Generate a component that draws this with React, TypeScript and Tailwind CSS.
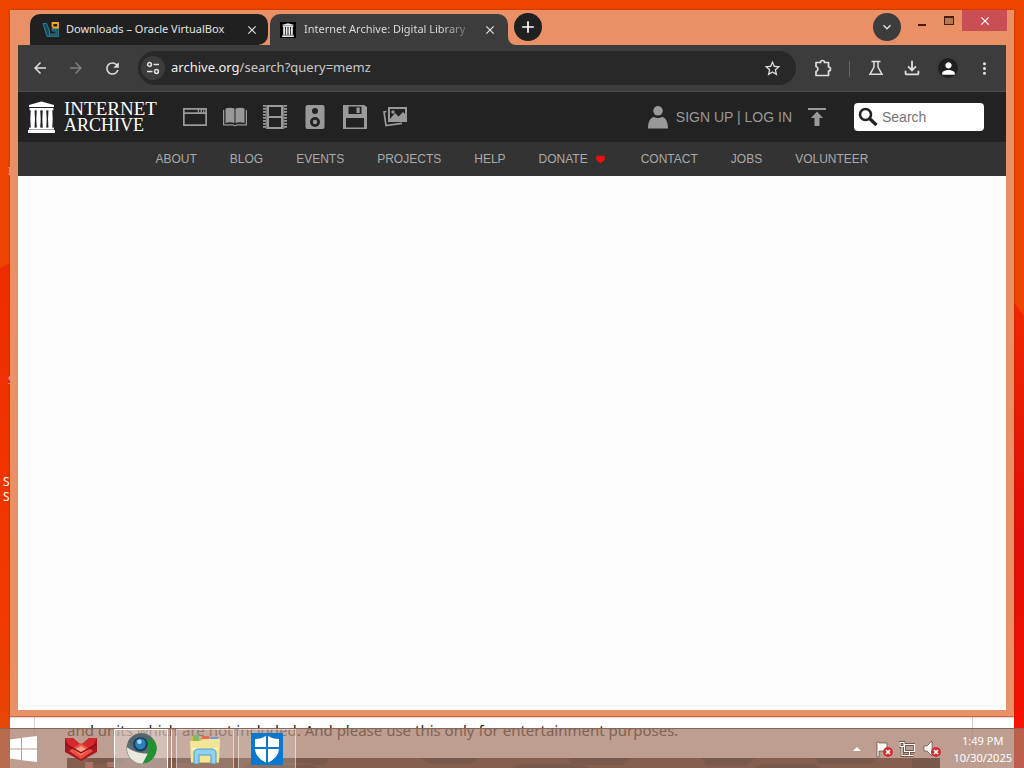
import React from "react";
import {
  MdArrowBack,
  MdArrowForward,
  MdClose,
  MdMoreVert,
  MdOutlineFileDownload,
  MdPerson,
  MdRefresh,
  MdStarBorder,
  MdAdd,
  MdKeyboardArrowDown,
} from "react-icons/md";

const ui = "font-['Noto_Sans','Open_Sans',sans-serif]";
const arial = "font-['Liberation_Sans',Arial,sans-serif]";

function Wallpaper() {
  return (
    <svg className="absolute inset-0 h-full w-full" viewBox="0 0 1024 768" preserveAspectRatio="none" aria-hidden="true">
      <defs>
        <linearGradient id="wallRight" x1="0" y1="0" x2="0" y2="1">
          <stop offset="0" stopColor="#f02800" />
          <stop offset="0.5" stopColor="#e00f08" />
          <stop offset="1" stopColor="#fa1400" />
        </linearGradient>
        <linearGradient id="wallLeft" x1="0" y1="0" x2="0" y2="1">
          <stop offset="0" stopColor="#f02c00" />
          <stop offset="0.7" stopColor="#f23a00" />
          <stop offset="1" stopColor="#e44a08" />
        </linearGradient>
      </defs>
      <rect width="1024" height="768" fill="#ee4400" />
      <path d="M0 268 L12 262 V768 H0Z" fill="url(#wallLeft)" />
      <path d="M1012 300 L1024 316 V768 H1012Z" fill="url(#wallRight)" />
    </svg>
  );
}

function ArchiveBuilding({ className }: { className: string }) {
  return (
    <svg className={className} viewBox="0 0 27 32" fill="currentColor" aria-hidden="true">
      <path d="M13.500 0.500 L26 4 V6 H1 V4Z" />
      <rect x="1.600" y="7" width="23.800" height="2.400" />
      <rect x="1" y="26.600" width="25" height="2" />
      <rect x="0" y="29" width="27" height="3" />
      <path d="M2.800 9h3.700l.5 9-.5 9H2.800l-.5-9z" />
      <path d="M8.800 9h3.400l.5 9-.5 9H8.800l-.5-9z" />
      <path d="M14.800 9h3.400l.5 9-.5 9h-3.400l-.5-9z" />
      <path d="M20.500 9h3.700l.5 9-.5 9h-3.700l-.5-9z" />
    </svg>
  );
}

function VirtualBoxIcon() {
  return (
    <svg className="h-4 w-[18px] shrink-0" viewBox="0 0 18 16" fill="none" aria-hidden="true">
      <path d="M1 1.500h3.500L7.500 9v5.500H5z" fill="#174a5c" stroke="#2d7f98" />
      <path d="M10 6.500h6.500v8H7.500V12H14V9h-4z" fill="#1c5a70" stroke="#2d7f98" strokeWidth=".8" />
      <path d="M10.500 5V1H16v4.500h-5.500" stroke="#f5a81c" strokeWidth="1.800" />
    </svg>
  );
}

function TabStrip() {
  return (
    <div className={`flex h-[35px] items-start pl-5 pr-[7px] text-[11px] text-[#e3e3e3] ${ui}`}>
      <div role="tablist" className="flex items-start gap-0.5 pt-1">
        <div role="tab" aria-selected="false" className="relative flex h-[31px] w-[238px] items-center rounded-t-[10px] rounded-br-[10px] bg-[#202020] pl-3 pr-2">
          <VirtualBoxIcon />
          <span className="ml-1.5 flex-1 whitespace-nowrap">Downloads – Oracle VirtualBox</span>
          <button aria-label="Close Downloads tab" className="grid size-4 place-items-center"><MdClose className="size-3.5" /></button>
        </div>
        <div role="tab" aria-selected="true" className="relative flex h-[31px] w-[238px] items-center rounded-t-[10px] bg-[#3c3c3c] pl-2.5 pr-2">
          <span className="grid size-4 shrink-0 place-items-center bg-black text-[#e6e6e6]"><ArchiveBuilding className="h-3.5 w-3" /></span>
          <span className="ml-2 bg-linear-to-r from-[#e3e3e3] from-85% to-[#777] bg-clip-text whitespace-nowrap text-transparent">Internet Archive: Digital Library</span>
          <button aria-label="Close Internet Archive tab" className="ml-auto grid size-5 place-items-center"><MdClose className="size-3.5" /></button>
          <svg className="absolute -right-2 bottom-0 size-2" viewBox="0 0 8 8" aria-hidden="true"><path d="M0 0 A8 8 0 0 0 8 8 H0Z" fill="#3c3c3c" /></svg>
        </div>
      </div>
      <button aria-label="New tab" className="ml-1.5 mt-[3px] grid size-7 place-items-center rounded-full bg-[#202020] text-white"><MdAdd className="size-5" /></button>
      <button aria-label="Search tabs" className="ml-auto mt-[3px] grid size-7 place-items-center rounded-full bg-[#3c3c3c]"><MdKeyboardArrowDown className="size-4" /></button>
      <button aria-label="Minimize" className="ml-2 grid h-[21px] w-[26px] place-items-center"><span className="mt-2 h-0.5 w-2 bg-[#4a1c0c]" /></button>
      <button aria-label="Maximize" className="grid h-[21px] w-[27px] place-items-center"><span className="h-[9px] w-2.5 border border-t-2 border-[#4a1c0c] bg-[#b97850]" /></button>
      <button aria-label="Close" className="grid h-[21px] w-[45px] place-items-center bg-[#c94f55] text-white"><MdClose className="size-3.5" /></button>
    </div>
  );
}

const toolButton = "grid h-[34px] w-9 shrink-0 place-items-center";

function Toolbar() {
  return (
    <div className={`flex h-[47px] items-start border-b border-[#4a4a4a] bg-[#3c3c3c] px-1 pt-1.5 text-[#dedede] ${ui}`}>
      <button aria-label="Back" className={toolButton}><MdArrowBack className="size-[18px]" /></button>
      <button aria-label="Forward" className={`${toolButton} text-[#808080]`}><MdArrowForward className="size-[18px]" /></button>
      <button aria-label="Reload" className={toolButton}><MdRefresh className="size-[19px]" /></button>
      <div className="ml-2 mr-[9px] flex h-[34px] min-w-0 flex-1 items-center rounded-full bg-[#282828] pl-[3px] pr-1.5">
        <button aria-label="Site information" className="grid size-6 shrink-0 place-items-center rounded-full bg-[#3c3c3c]">
          <svg className="h-4 w-4" viewBox="0 0 16 16" fill="none" stroke="#e3e3e3" strokeWidth="1.500" aria-hidden="true">
            <circle cx="4.500" cy="4.500" r="1.900" /><path d="M8.500 4.500H14M2 11.500h5.500" /><circle cx="11.500" cy="11.500" r="1.900" />
          </svg>
        </button>
        <a href="#search" className="ml-1.5 flex-1 whitespace-nowrap text-[13px] text-[#c8c8c8]"><span className="text-[#f0f0f0]">archive.org</span>/search?query=memz</a>
        <button aria-label="Bookmark" className={toolButton}><MdStarBorder className="size-[19px]" /></button>
      </div>
      <button aria-label="Extensions" className={toolButton}>
        <svg className="size-[18px]" viewBox="0 0 18 18" fill="none" stroke="currentColor" strokeWidth="1.700" strokeLinejoin="round" aria-hidden="true">
          <path d="M2 3.500h4.500a2 2 0 0 1 4 0H14.500V8a2 2 0 0 1 0 4v4.500H2v-4a2.600 2.600 0 0 0 0-5z" />
        </svg>
      </button>
      <span className="mt-2.5 flex h-4 w-[17px] shrink-0 justify-center"><span className="w-px bg-[#666]" /></span>
      <button aria-label="Labs" className={toolButton}>
        <svg className="size-4" viewBox="0 0 16 16" fill="none" stroke="currentColor" strokeWidth="1.500" aria-hidden="true">
          <path d="M3.500 1.500h9M6 1.500v5.500L2 14.250h12L10 7V1.500" />
        </svg>
      </button>
      <button aria-label="Downloads" className={toolButton}><MdOutlineFileDownload className="size-[22px]" /></button>
      <button aria-label="Profile" className={toolButton}><span className="grid size-5 place-items-center rounded-full bg-[#1f1f1f] text-white"><MdPerson className="size-[19px]" /></span></button>
      <button aria-label="Menu" className={toolButton}><MdMoreVert className="size-[19px]" /></button>
    </div>
  );
}

const media: { label: string; art: React.ReactNode }[] = [
  { label: "Web", art: <path fillRule="evenodd" d="M0 3h24v18H0zM1.700 9v10.300h20.600V9zM1.700 4.700V7.200h13V4.700zM16 4.700V7.200h1.600V4.700zM19 4.700V7.200h1.200V4.700zM21.300 4.700V7.200h1V4.700z" /> },
  { label: "Texts", art: <><path d="M2.500 3.500c3-1.200 6.800-1 9 0V18c-3-1-6-1-9 0zM12.500 3.500c3-1 6-1.200 9 0V18c-3-1-6-1-9 0z" /><path d="M.6 5v14.800h9.600c1 1.200 2.600 1.200 3.600 0h9.600V5" fill="none" stroke="currentColor" strokeWidth="1.300" /></> },
  { label: "Video", art: <><path fillRule="evenodd" d="M4 0h16v24H4zM6 2v9h12V2zM6 13v9h12v-9z" /><path d="M1.500 0v24M22.500 0v24" stroke="currentColor" strokeWidth="3" strokeDasharray="1.800 1.200" /><path d="M3.300 0v24M20.700 0v24" stroke="currentColor" strokeWidth=".9" /></> },
  { label: "Audio", art: <path fillRule="evenodd" d="M4.500 0h15a2 2 0 0 1 2 2v20a2 2 0 0 1-2 2h-15a2 2 0 0 1-2-2V2a2 2 0 0 1 2-2zM12 3a3 3 0 1 0 0 6 3 3 0 0 0 0-6zM12 12a5 5 0 1 0 0 10 5 5 0 0 0 0-10zM12 14.800a2.200 2.200 0 1 1 0 4.400 2.200 2.200 0 0 1 0-4.400z" /> },
  { label: "Software", art: <path fillRule="evenodd" d="M0 0h21l3 2v22H0zM5.500 1.500V9h13V1.500zM13.500 2.500h3.200v5.500h-3.200zM3 13v9.500h18V13z" /> },
  { label: "Images", art: <><path fillRule="evenodd" d="M5 2h19v15H5zM7 4v11h15V4z" /><path d="M7 14l5-6 3.500 3.500L20 7l2 2v6H7z" /><circle cx="10" cy="7" r="1.700" /><path d="M3.500 6.500L1 7l2 13.500 16-2.200" fill="none" stroke="currentColor" strokeWidth="1.700" /></> },
];

const links = ["ABOUT", "BLOG", "EVENTS", "PROJECTS", "HELP", "DONATE", "CONTACT", "JOBS", "VOLUNTEER"];

function ArchiveHeader() {
  return (
    <header className={arial}>
      <div className="flex h-[50px] items-center bg-[#222] pl-2.5 pr-[22px] text-[#999]">
        <a href="#home" className="flex items-center gap-[9px] text-white">
          <ArchiveBuilding className="h-8 w-[27px]" />
          <span className="flex w-[102px] flex-col font-['Liberation_Serif',serif] text-[19px] leading-[17px]">
            <span>INTERNET</span>
            <span className="text-[18px]">ARCHIVE</span>
          </span>
        </a>
        <nav aria-label="Media" className="ml-[9px] flex">
          {media.map((m) => (
            <a key={m.label} href={`#${m.label.toLowerCase()}`} aria-label={m.label} className="grid h-[50px] w-10 place-items-center">
              <svg className="size-6" viewBox="0 0 24 24" fill="currentColor" aria-hidden="true">{m.art}</svg>
            </a>
          ))}
        </nav>
        <div className="ml-auto flex items-center">
          <svg className="h-6 w-5" viewBox="0 0 20 24" fill="currentColor" aria-hidden="true"><circle cx="10" cy="5.800" r="4.800" /><path d="M0 23.500c0-7 2.500-11 6-11.500 2.500 1.300 5.500 1.300 8 0 3.500.5 6 4.500 6 11.500z" /></svg>
          <span className="ml-2 whitespace-nowrap text-sm"><a href="#signup">SIGN UP</a> | <a href="#login">LOG IN</a></span>
          <a href="#upload" aria-label="Upload" className="ml-4"><svg className="h-5 w-[18px]" viewBox="0 0 18 20" fill="currentColor" aria-hidden="true"><path d="M0 1h18v2H0zM9 4.500l6 6.500h-3.500v8h-5v-8H3z" /></svg></a>
          <label className="ml-7 flex h-7 w-[130px] items-center rounded bg-white pl-1">
            <svg className="size-5 shrink-0" viewBox="0 0 20 20" fill="none" stroke="#222" strokeWidth="2.600" aria-hidden="true"><circle cx="7.500" cy="7.500" r="5.500" /><path d="M11.500 11.500L18.500 18" strokeWidth="3.200" /></svg>
            <input aria-label="Search" placeholder="Search" className="ml-1 w-full min-w-0 bg-transparent text-sm outline-none placeholder:text-[#757575]" />
          </label>
        </div>
      </div>
      <nav aria-label="Site" className="flex h-[34px] items-center justify-center gap-[33px] bg-[#333] text-xs text-[#aaa]">
        {links.map((l) => (
          <a key={l} href={`#${l.toLowerCase()}`} className="flex items-center gap-2 whitespace-nowrap">
            {l}
            {l === "DONATE" && <svg className="h-2 w-3" viewBox="0 0 12 8" aria-hidden="true"><path d="M0 3C0 .2 3.500 0 4.500 1 5.500 0 9 .2 9 3 9 5.500 6.500 7 4.500 8 2.500 7 0 5.500 0 3z" fill="#ee1010" /></svg>}
          </a>
        ))}
      </nav>
    </header>
  );
}

function DocumentWindow() {
  return (
    <section className={`absolute inset-x-2.5 bottom-0 h-[51px] overflow-hidden bg-white ${ui}`}>
      <div className="ml-6 mr-[41px] h-[41px] border-x border-[#d5d5d5] pl-8 pt-[3px]">
        <p className="whitespace-nowrap text-[15px] leading-[20px] text-[#222]">and units which are not included. And please use this only for entertainment purposes.</p>
      </div>
      <div className="ml-[57px] mr-[74px] h-2.5 bg-black">
        <svg className="h-full w-full" viewBox="0 0 870 10" preserveAspectRatio="none" aria-hidden="true">
          <path d="M0 0h20l4 6h30l5-6h40l10 5h30l9-5h60l8 7h40l6-7h90l10 6h40l8-6h90l4 7h50l8-7h70l5 8h40l8-8h60l5 6h50l8-6h34v10h-90l-8-4h-50l-8 4H520l-9-4h-60l-7 4H250l-8-5h-60l-6 5H0z" fill="#2e1412" />
          <path d="M18 4h8v6h-8zM40 4h7v5h-7z" fill="#c06068" />
        </svg>
      </div>
    </section>
  );
}

function Desktop() {
  return (
    <>
      <span className={`absolute left-2 top-[163px] text-[11px] leading-[15px] text-[#ead0c8] ${ui}`}>I</span>
      <span className={`absolute left-2 top-[372px] text-[11px] leading-[15px] text-[#ead0c8] ${ui}`}>S</span>
      <span className={`absolute left-[3px] top-[474px] w-2 text-xs leading-[15px] text-white ${ui}`}>S S</span>
    </>
  );
}

const taskButton = "grid h-10 place-items-center";

function BadgeCross() {
  return <g><circle cx="13" cy="12" r="5" fill="#d22f35" /><path d="M11 10l4 4m0-4l-4 4" stroke="#fff" strokeWidth="1.600" /></g>;
}

function Taskbar() {
  return (
    <footer className={`absolute inset-x-0 bottom-0 flex h-10 items-center border-t border-[#87675c] bg-[rgba(164,122,103,0.73)] pr-3 text-white ${ui}`}>
      <button aria-label="Start" className="ml-2.5 grid h-10 w-7 place-items-center">
        <svg className="h-[26px] w-7" viewBox="0 0 28 26" fill="#fff" aria-hidden="true"><path d="M0 3.500L11 2v10.500H0zM12 1.800L27 0v12.500H12zM0 13.500h11V24L0 22.500zM12 13.500h15V26l-15-1.800z" /></svg>
      </button>
      <button aria-label="Red app" className={`${taskButton} ml-[22px] w-[42px]`}>
        <svg className="h-6 w-8" viewBox="0 0 32 24" aria-hidden="true">
          <path d="M0 1l8 0 8 7 8-7 8 0v14l-16 9-16-9z" fill="#a81820" />
          <path d="M0 1h8l8 7 8-7h8l-4 8-12 6L4 9z" fill="#d42a2c" />
          <path d="M4 14l12-8 12 8-12 8z" fill="#ee5140" /><path d="M9 13l7-4 7 4-7 5z" fill="#ffa08a" /><path d="M0 7l16 9 16-9" fill="none" stroke="#8b1015" strokeWidth="1.500" />
        </svg>
      </button>
      <button aria-label="Browser" className={`${taskButton} ml-3 w-[54px] border border-white bg-white/35`}>
        <svg className="size-[31px]" viewBox="0 0 30 30" aria-hidden="true">
          <circle cx="15" cy="15" r="14.500" fill="#5f6c72" />
          <path d="M2 8A14.500 14.500 0 0 1 26 5.500L18 9 7 15z" fill="#53666d" />
          <path d="M26 5.500A14.500 14.500 0 0 1 16 29.500L22 18l-3-11z" fill="#219232" />
          <path d="M1 14a14.500 14.500 0 0 0 15 15.500L21 20c-7 0-14-2-20-6z" fill="#e9e9dd" />
          <circle cx="14" cy="11" r="7" fill="#153e5e" /><circle cx="14" cy="10.500" r="5.200" fill="#2c7db8" /><circle cx="13" cy="8.500" r="2.200" fill="#a6d7f1" />
        </svg>
      </button>
      <span className="h-10 w-1 border-r border-white/80" />
      <button aria-label="File Explorer" className={`${taskButton} ml-1 w-[58px] border border-white/50 bg-white/15`}>
        <svg className="h-[31px] w-8" viewBox="0 0 32 31" aria-hidden="true">
          <path d="M2 3h7l2 3h19v24H2z" fill="#d9b852" /><path d="M4 2h6v6H4z" fill="#7dbc64" /><path d="M13 3h7v7h-7z" fill="#e76855" /><path d="M21 4h8v8h-8z" fill="#6b9edc" /><path d="M1 8h10l3-2h17l-1 23H2z" fill="#f5e697" />
          <path d="M3 16h26" stroke="#fff4b7" strokeWidth="2" /><path d="M5 31V20c0-3 2-4 5-4h12c3 0 5 1 5 4v11h-5v-9H10v9z" fill="#8fd2ef" stroke="#4a9aca" />
        </svg>
      </button>
      <button aria-label="Windows Defender" className={`${taskButton} ml-1 w-[58px] border border-white/50 bg-white/15`}>
        <svg className="size-8" viewBox="0 0 32 32" aria-hidden="true">
          <path d="M0 0h32v32H0z" fill="#0878d1" /><path d="M16 2c4 3 8 4 12 4v9c0 7-5 12-12 15C9 27 4 22 4 15V6c4 0 8-1 12-4z" fill="#fff" /><path d="M16 2v28M4 15h24" stroke="#0878d1" strokeWidth="2" />
        </svg>
      </button>
      <div className="ml-auto flex items-center gap-2">
        <button aria-label="Show hidden icons" className="mr-1 grid h-4 w-3 place-items-center"><svg className="h-1 w-2" viewBox="0 0 8 4" aria-hidden="true"><path d="M4 0l4 4H0z" fill="#fff" /></svg></button>
        <svg className="h-[18px] w-4 overflow-visible" viewBox="0 0 18 18" preserveAspectRatio="xMinYMid slice" role="img" aria-label="Action Center"><path d="M2 17V2h2v1h8v8H4v6z" fill="#fff" stroke="#62463b" strokeWidth=".7" /><BadgeCross /></svg>
        <svg className="size-4" viewBox="0 0 16 16" fill="none" role="img" aria-label="Network"><path d="M5.500 3.500h10v7h-10zM10.500 11v3M6.500 14.500h8M1 1.500h4v4H1zM3 6v8.500h4" stroke="#5b4036" strokeWidth="2.500" /><path d="M5.500 3.500h10v7h-10zM10.500 11v3M6.500 14.500h8M1 1.500h4v4H1zM3 6v8.500h4" stroke="#fff" strokeWidth="1.200" /></svg>
        <svg className="h-[18px] w-4 overflow-visible" viewBox="0 0 18 18" preserveAspectRatio="xMinYMid slice" role="img" aria-label="Volume"><path d="M1 6h3l5-5v15l-5-5H1z" fill="#fff" stroke="#62463b" strokeWidth=".7" /><BadgeCross /></svg>
        <time dateTime="2025-10-30T13:49" className="ml-1.5 flex flex-col items-center whitespace-nowrap text-[11px] leading-[17px]"><span>1:49 PM</span><span>10/30/2025</span></time>
      </div>
    </footer>
  );
}

export default function App() {
  return (
    <div className="relative h-screen overflow-hidden">
      <Wallpaper />
      <Desktop />
      <DocumentWindow />
      <main className="absolute inset-x-2.5 bottom-[51px] top-2.5 flex flex-col border-b border-[#c9693f] bg-[#e99066] shadow-[0_0_2px_rgba(90,30,0,0.5)]">
        <TabStrip />
        <div className="mx-2 mb-1.5 flex min-h-0 flex-1 flex-col bg-[#fdfdfd]">
          <Toolbar />
          <ArchiveHeader />
        </div>
      </main>
      <Taskbar />
    </div>
  );
}
